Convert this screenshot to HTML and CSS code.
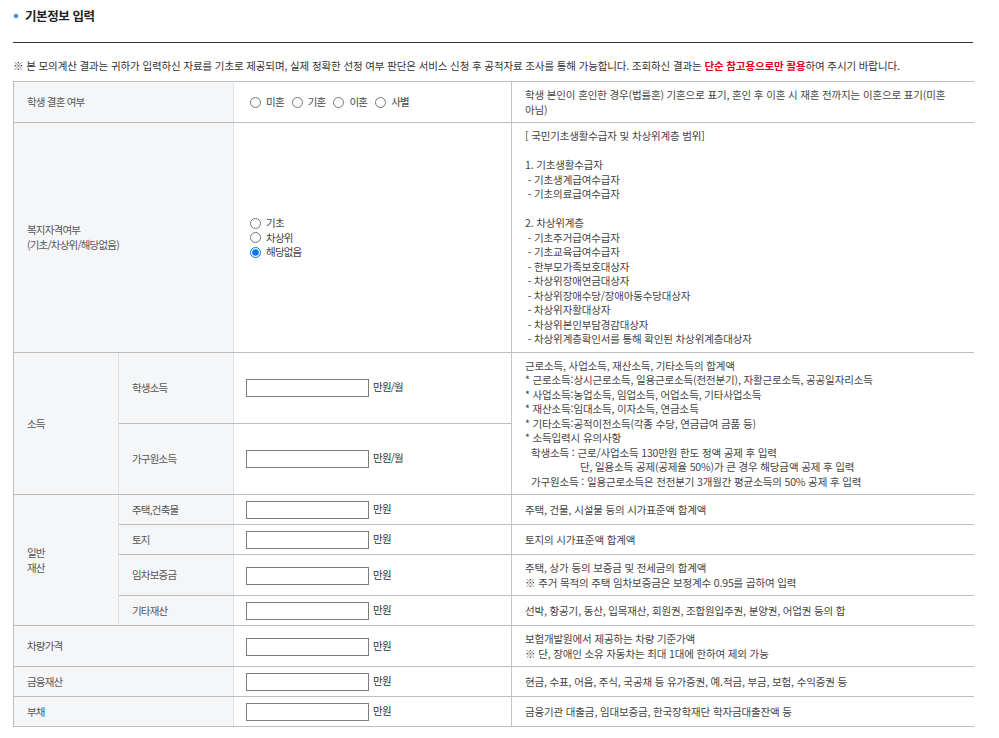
FILE: index.html
```html
<!DOCTYPE html>
<html lang="ko">
<head>
<meta charset="utf-8">
<title>기본정보 입력</title>
<link rel="stylesheet" href="styles.css">
</head>
<body>
<div class="page">
  <div class="head">
    <h2 class="title"><span class="diamond"></span>기본정보 입력</h2>
  </div>
  <p class="notice">※ 본 모의계산 결과는 귀하가 입력하신 자료를 기초로 제공되며, 실제 정확한 선정 여부 판단은 서비스 신청 후 공적자료 조사를 통해 가능합니다. 조회하신 결과는 <strong class="warn">단순 참고용으로만 활용</strong>하여 주시기 바랍니다.</p>
  <table class="form">
    <colgroup>
      <col class="c1"><col class="c2"><col class="c3"><col class="c4">
    </colgroup>
    <tbody>
      <tr>
        <th colspan="2" class="lbl">학생 결혼 여부</th>
        <td class="inp">
          <div class="opts">
            <label class="opt"><input type="radio" name="marry">미혼</label>
            <label class="opt"><input type="radio" name="marry">기혼</label>
            <label class="opt"><input type="radio" name="marry">이혼</label>
            <label class="opt"><input type="radio" name="marry">사별</label>
          </div>
        </td>
        <td class="desc">학생 본인이 혼인한 경우(법률혼) 기혼으로 표기, 혼인 후 이혼 시 재혼 전까지는 이혼으로 표기(미혼<br>아님)</td>
      </tr>
      <tr>
        <th colspan="2" class="lbl">복지자격여부<br>(기초/차상위/해당없음)</th>
        <td class="inp">
          <div class="vopts">
            <label class="opt"><input type="radio" name="welfare">기초</label>
            <label class="opt"><input type="radio" name="welfare">차상위</label>
            <label class="opt"><input type="radio" name="welfare" checked>해당없음</label>
          </div>
        </td>
        <td class="desc">[ 국민기초생활수급자 및 차상위계층 범위]<br><br>1. 기초생활수급자<br>&nbsp;- 기초생계급여수급자<br>&nbsp;- 기초의료급여수급자<br><br>2. 차상위계층<br>&nbsp;- 기초주거급여수급자<br>&nbsp;- 기초교육급여수급자<br>&nbsp;- 한부모가족보호대상자<br>&nbsp;- 차상위장애연금대상자<br>&nbsp;- 차상위장애수당/장애아동수당대상자<br>&nbsp;- 차상위자활대상자<br>&nbsp;- 차상위본인부담경감대상자<br>&nbsp;- 차상위계층확인서를 통해 확인된 차상위계층대상자</td>
      </tr>
      <tr>
        <th rowspan="2" class="lbl">소득</th>
        <th class="lbl sub tall">학생소득</th>
        <td class="inp"><div class="field"><input type="text" class="box"><span class="unit">만원/월</span></div></td>
        <td rowspan="2" class="desc">근로소득, 사업소득, 재산소득, 기타소득의 합계액<br>* 근로소득:상시근로소득, 일용근로소득(전전분기), 자활근로소득, 공공일자리소득<br>* 사업소득:농업소득, 임업소득, 어업소득, 기타사업소득<br>* 재산소득:임대소득, 이자소득, 연금소득<br>* 기타소득:공적이전소득(각종 수당, 연금급여 금품 등)<br>* 소득입력시 유의사항<br><span class="ind1">학생소득 : 근로/사업소득 130만원 한도 정액 공제 후 입력</span><br><span class="ind2">단, 일용소득 공제(공제율 50%)가 큰 경우 해당금액 공제 후 입력</span><br><span class="ind1">가구원소득 : 일용근로소득은 전전분기 3개월간 평균소득의 50% 공제 후 입력</span></td>
      </tr>
      <tr>
        <th class="lbl sub">가구원소득</th>
        <td class="inp"><div class="field"><input type="text" class="box"><span class="unit">만원/월</span></div></td>
      </tr>
      <tr>
        <th rowspan="4" class="lbl">일반<br>재산</th>
        <th class="lbl sub">주택,건축물</th>
        <td class="inp"><div class="field"><input type="text" class="box"><span class="unit">만원</span></div></td>
        <td class="desc">주택, 건물, 시설물 등의 시가표준액 합계액</td>
      </tr>
      <tr>
        <th class="lbl sub">토지</th>
        <td class="inp"><div class="field"><input type="text" class="box"><span class="unit">만원</span></div></td>
        <td class="desc">토지의 시가표준액 합계액</td>
      </tr>
      <tr>
        <th class="lbl sub">임차보증금</th>
        <td class="inp"><div class="field"><input type="text" class="box"><span class="unit">만원</span></div></td>
        <td class="desc">주택, 상가 등의 보증금 및 전세금의 합계액<br>※ 주거 목적의 주택 임차보증금은 보정계수 0.95를 곱하여 입력</td>
      </tr>
      <tr>
        <th class="lbl sub">기타재산</th>
        <td class="inp"><div class="field"><input type="text" class="box"><span class="unit">만원</span></div></td>
        <td class="desc">선박, 항공기, 동산, 입목재산, 회원권, 조합원입주권, 분양권, 어업권 등의 합</td>
      </tr>
      <tr>
        <th colspan="2" class="lbl">차량가격</th>
        <td class="inp"><div class="field"><input type="text" class="box"><span class="unit">만원</span></div></td>
        <td class="desc">보험개발원에서 제공하는 차량 기준가액<br>※ 단, 장애인 소유 자동차는 최대 1대에 한하여 제외 가능</td>
      </tr>
      <tr>
        <th colspan="2" class="lbl">금융재산</th>
        <td class="inp"><div class="field"><input type="text" class="box"><span class="unit">만원</span></div></td>
        <td class="desc">현금, 수표, 어음, 주식, 국공채 등 유가증권, 예.적금, 부금, 보험, 수익증권 등</td>
      </tr>
      <tr>
        <th colspan="2" class="lbl">부채</th>
        <td class="inp"><div class="field"><input type="text" class="box"><span class="unit">만원</span></div></td>
        <td class="desc">금융기관 대출금, 임대보증금, 한국장학재단 학자금대출잔액 등</td>
      </tr>
    </tbody>
  </table>
</div>
</body>
</html>
```

FILE: styles.css
```css
* { box-sizing: border-box; }
html, body { margin: 0; padding: 0; background: #fff; }
body {
  font-family: "Noto Sans CJK KR", "Noto Sans", sans-serif;
  color: #444;
  font-size: 10.5px;
  letter-spacing: -0.8px;
}
.page {
  width: 960px;
  margin-left: 13px;
}
.head {
  height: 43px;
  border-bottom: 1px solid #333;
  padding-top: 8px;
}
.title {
  margin: 0;
  display: flex;
  align-items: center;
  gap: 7px;
  font-size: 12.5px;
  line-height: 16px;
  font-weight: 700;
  color: #222;
  letter-spacing: -0.4px;
}
.diamond {
  display: inline-block;
  width: 4px;
  height: 4px;
  margin-left: 1px;
  background: #4a8ad6;
  transform: rotate(45deg);
}
.notice {
  margin: 16px 0 8px;
  line-height: 14px;
  color: #333;
  letter-spacing: -0.12px;
}
.warn { color: #e3001b; font-weight: 700; }
.form {
  width: 960px;
  table-layout: fixed;
  border-collapse: collapse;
  border-top: 1px solid #bdbdbd;
}
.c1 { width: 105px; }
.c2 { width: 115px; }
.c3 { width: 278px; }
.c4 { width: 462px; }
.form th, .form td {
  border-top: 1px solid #bdbdbd;
  border-bottom: 1px solid #bdbdbd;
  border-left: 1px solid #bdbdbd;
  border-right: 1px solid #e2e2e2;
  padding: 6px 13px 5px;
  line-height: 14.5px;
  vertical-align: middle;
  text-align: left;
  font-weight: 400;
}
.form .lbl { background: #f5f6f8; color: #555; }
.form .sub { border-left-color: #e2e2e2; }
.form .inp { padding-left: 12px; border-left-color: #e2e2e2; border-right-color: #c4c4c4; }
.form .desc {
  border-left-color: #c4c4c4;
  border-right: none;
  color: #444;
  letter-spacing: -0.15px;
  line-height: 14.5px;
}
.opts { display: flex; align-items: center; }
.opt { display: inline-flex; align-items: center; gap: 5px; margin-right: 4px; }
.opt input {
  width: 11px;
  height: 11px;
  margin: 0 0 0 4px;
}
.vopts { display: flex; flex-direction: column; }
.vopts .opt { height: 14.5px; }
.field { display: flex; align-items: flex-start; gap: 4px; height: 18px; }
.box {
  width: 123px;
  height: 18px;
  margin: 0;
  border: 1px solid #7d7d7d;
  background: #fff;
  padding: 0 3px;
  font: inherit;
}
.unit { line-height: 15px; color: #333; }
.ind1 { padding-left: 6px; }
.ind2 { padding-left: 55px; }
```
